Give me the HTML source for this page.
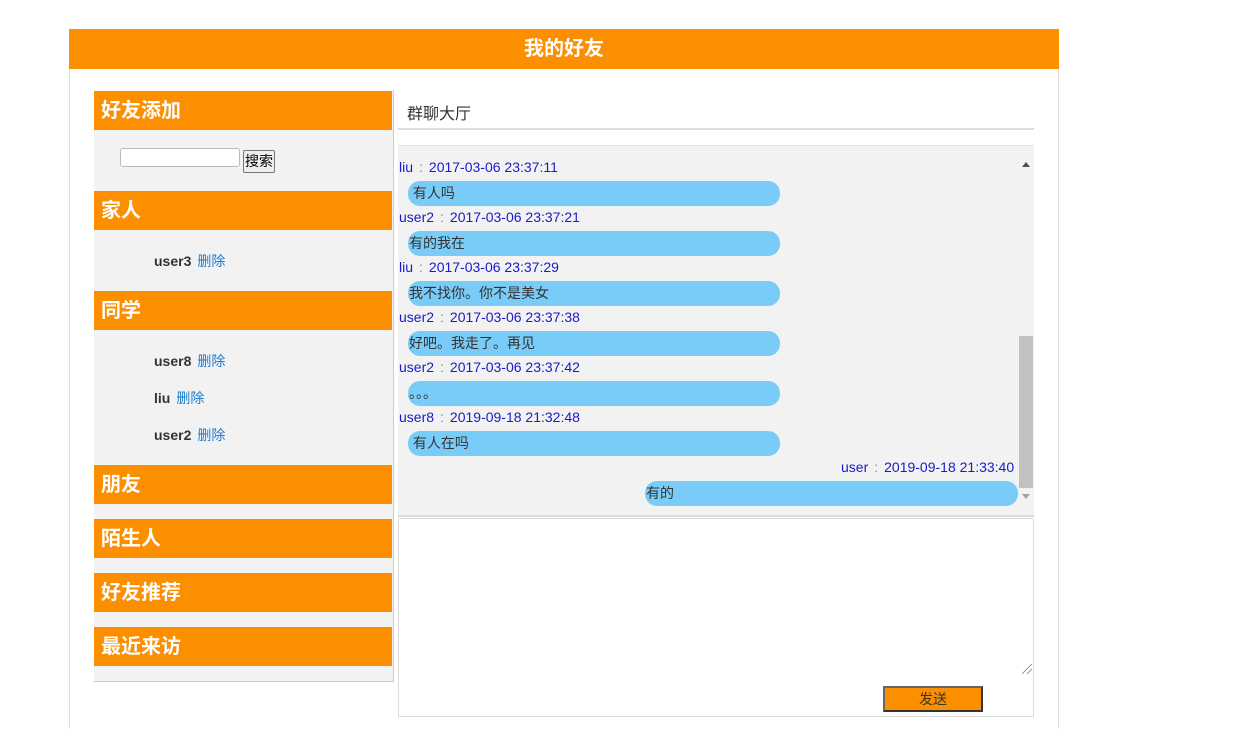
<!DOCTYPE html>
<html><head><meta charset="utf-8"><style>
*{margin:0;padding:0;box-sizing:border-box}
body{width:1236px;height:723px;background:#fff;font-family:"Liberation Sans","Noto Sans CJK SC",sans-serif;position:relative;overflow:hidden}
.a{position:absolute}
.wrap{left:69px;top:29px;width:990px;height:700px;border-left:1px solid #ddd;border-right:1px solid #ddd}
.top{left:69px;top:29px;width:990px;height:40px;background:#fb8f00;color:#fff;font-weight:bold;font-size:20px;text-align:center;line-height:40px}
.left{left:94px;top:90px;width:300px;height:592px;background:#f2f2f2;border-right:1px solid #ccc;border-bottom:1px solid #ccc}
.h{left:94px;width:298px;height:39px;background:#fb8f00;color:#fff;font-weight:bold;font-size:20px;line-height:41px;padding-left:7px}
.f{font-size:14px;font-weight:bold;color:#333}
.f span{color:#1e7bd0;font-weight:normal;margin-left:6px}
.m{font-size:14px;color:#1a1acc;left:399px}
.m i{font-style:normal;color:#888;margin:0 6px}
.b{left:408px;width:372px;height:25px;border-radius:12px;background:#79ccf7;font-size:14px;color:#333;line-height:25px;padding-left:1px}
</style></head><body>
<div class="a wrap"></div>
<div class="a top">我的好友</div>
<div class="a left"></div>
<div class="a h" style="top:91px">好友添加</div>
<div class="a" style="left:120px;top:148px;width:120px;height:19px;background:#fff;border:1px solid #bbb;border-radius:3px"></div>
<div class="a" style="left:243px;top:150px;width:32px;height:23px;border:1px solid #777;border-radius:2px;background:#eee;font-size:14px;line-height:21px;text-align:center">搜索</div>
<div class="a h" style="top:191px">家人</div>
<div class="a f" style="left:154px;top:251px">user3<span>删除</span></div>
<div class="a h" style="top:291px">同学</div>
<div class="a f" style="left:154px;top:351px">user8<span>删除</span></div>
<div class="a f" style="left:154px;top:388px">liu<span>删除</span></div>
<div class="a f" style="left:154px;top:425px">user2<span>删除</span></div>
<div class="a h" style="top:465px">朋友</div>
<div class="a h" style="top:519px">陌生人</div>
<div class="a h" style="top:573px">好友推荐</div>
<div class="a h" style="top:627px">最近来访</div>

<div class="a" style="left:407px;top:100px;font-size:16px;color:#333">群聊大厅</div>
<div class="a" style="left:398px;top:128px;width:636px;height:2px;background:#ddd"></div>
<div class="a" style="left:398px;top:145px;width:636px;height:372px;background:#f2f2f2;border-top:1px solid #e4e4e4;border-bottom:2px solid #ddd"></div>
<div class="a" style="left:1019px;top:336px;width:14px;height:152px;background:#c1c1c1"></div>
<div class="a" style="left:1022px;top:162px;width:0;height:0;border-left:4px solid transparent;border-right:4px solid transparent;border-bottom:5px solid #505050"></div>
<div class="a" style="left:1022px;top:494px;width:0;height:0;border-left:4px solid transparent;border-right:4px solid transparent;border-top:5px solid #a3a3a3"></div>

<div class="a m" style="top:159px">liu<i>:</i>2017-03-06 23:37:11</div>
<div class="a b" style="top:181px">&nbsp;有人吗</div>
<div class="a m" style="top:209px">user2<i>:</i>2017-03-06 23:37:21</div>
<div class="a b" style="top:231px">有的我在</div>
<div class="a m" style="top:259px">liu<i>:</i>2017-03-06 23:37:29</div>
<div class="a b" style="top:281px">我不找你。你不是美女</div>
<div class="a m" style="top:309px">user2<i>:</i>2017-03-06 23:37:38</div>
<div class="a b" style="top:331px">好吧。我走了。再见</div>
<div class="a m" style="top:359px">user2<i>:</i>2017-03-06 23:37:42</div>
<div class="a b" style="top:381px">。。。</div>
<div class="a m" style="top:409px">user8<i>:</i>2019-09-18 21:32:48</div>
<div class="a b" style="top:431px">&nbsp;有人在吗</div>
<div class="a m" style="top:459px;left:841px">user<i>:</i>2019-09-18 21:33:40</div>
<div class="a b" style="top:481px;left:645px;width:373px">有的</div>

<div class="a" style="left:398px;top:518px;width:636px;height:199px;border:1px solid #ddd"></div>
<div class="a" style="left:1022px;top:664px;width:10px;height:10px;background:linear-gradient(135deg,transparent 45%,#888 46%,#888 52%,transparent 53%,transparent 70%,#888 71%,#888 77%,transparent 78%)"></div>
<div class="a" style="left:883px;top:686px;width:100px;height:26px;background:#fb8f00;border:2px solid #333;border-top-color:#666;border-left-color:#666;font-size:14px;color:#333;text-align:center;line-height:22px">发送</div>
</body></html>
